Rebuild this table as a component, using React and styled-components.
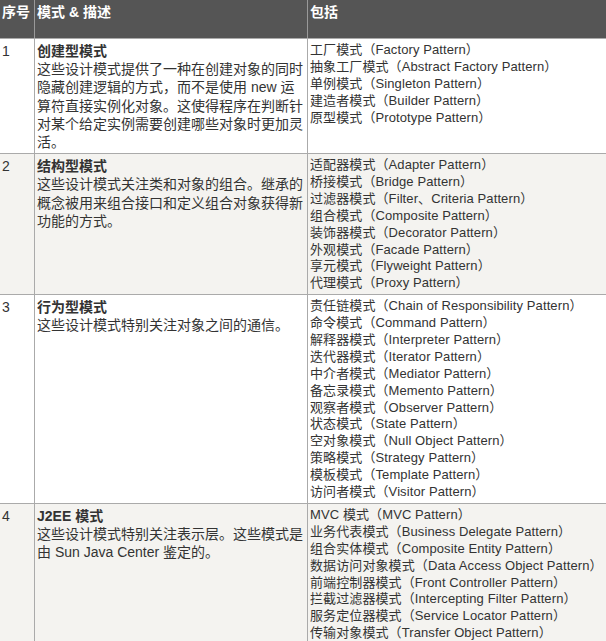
import React from "react";
import styled, {createGlobalStyle} from "styled-components";

const GlobalStyle = createGlobalStyle`
  html, body {
    margin: 0;
    padding: 0;
    background: #fff;
    overflow: hidden;
  }
  body {
    font-family: "Liberation Sans", "Noto Sans CJK SC", sans-serif;
    color: #333;
  }
`

const Table = styled.table`
  width: 640px;
  table-layout: fixed;
  border-collapse: collapse;
  font-family: "Liberation Sans", "Noto Sans CJK SC", sans-serif;
`

const Th = styled.th`
  width: ${props => props.$w ? props.$w + "px" : "auto"};
  height: 32px;
  background: #555;
  color: #fff;
  font-size: 14px;
  font-weight: bold;
  line-height: 1.3;
  text-align: left;
  vertical-align: top;
  padding: 3px 2px 3px;
  border-left: 1px solid #999;
  border-bottom: 1px solid #aaa;
  white-space: nowrap;
  overflow: hidden;
  &:first-child {
    border-left: none;
  }
`

const Row = styled.tr`
  background: ${props => props.$alt ? "#f4f3f0" : "#fff"};
`

const Td = styled.td`
  vertical-align: top;
  padding: 3px 2px 2px;
  border-left: 1px solid #aaa;
  border-bottom: 1px solid #aaa;
  line-height: 1.3;
  font-size: ${props => props.$small ? "13px" : "14px"};
  letter-spacing: ${props => props.$small ? "0.1px" : "0"};
  color: #333;
  &:first-child {
    border-left: none;
  }
`

const Title = styled.b`
  display: block;
  font-weight: bold;
`

const PatternLine = styled.div`
  white-space: nowrap;
`

const data = [
    {
        num: "1",
        title: "创建型模式",
        desc: "这些设计模式提供了一种在创建对象的同时隐藏创建逻辑的方式，而不是使用 new 运算符直接实例化对象。这使得程序在判断针对某个给定实例需要创建哪些对象时更加灵活。",
        patterns: [
            "工厂模式（Factory Pattern）",
            "抽象工厂模式（Abstract Factory Pattern）",
            "单例模式（Singleton Pattern）",
            "建造者模式（Builder Pattern）",
            "原型模式（Prototype Pattern）",
        ]
    },
    {
        num: "2",
        title: "结构型模式",
        desc: "这些设计模式关注类和对象的组合。继承的概念被用来组合接口和定义组合对象获得新功能的方式。",
        patterns: [
            "适配器模式（Adapter Pattern）",
            "桥接模式（Bridge Pattern）",
            "过滤器模式（Filter、Criteria Pattern）",
            "组合模式（Composite Pattern）",
            "装饰器模式（Decorator Pattern）",
            "外观模式（Facade Pattern）",
            "享元模式（Flyweight Pattern）",
            "代理模式（Proxy Pattern）",
        ]
    },
    {
        num: "3",
        title: "行为型模式",
        desc: "这些设计模式特别关注对象之间的通信。",
        patterns: [
            "责任链模式（Chain of Responsibility Pattern）",
            "命令模式（Command Pattern）",
            "解释器模式（Interpreter Pattern）",
            "迭代器模式（Iterator Pattern）",
            "中介者模式（Mediator Pattern）",
            "备忘录模式（Memento Pattern）",
            "观察者模式（Observer Pattern）",
            "状态模式（State Pattern）",
            "空对象模式（Null Object Pattern）",
            "策略模式（Strategy Pattern）",
            "模板模式（Template Pattern）",
            "访问者模式（Visitor Pattern）",
        ]
    },
    {
        num: "4",
        title: "J2EE 模式",
        desc: "这些设计模式特别关注表示层。这些模式是由 Sun Java Center 鉴定的。",
        patterns: [
            "MVC 模式（MVC Pattern）",
            "业务代表模式（Business Delegate Pattern）",
            "组合实体模式（Composite Entity Pattern）",
            "数据访问对象模式（Data Access Object Pattern）",
            "前端控制器模式（Front Controller Pattern）",
            "拦截过滤器模式（Intercepting Filter Pattern）",
            "服务定位器模式（Service Locator Pattern）",
            "传输对象模式（Transfer Object Pattern）",
        ]
    },
]

const App = () => {

    return (
        <>
            <GlobalStyle/>
            <Table>
                <thead>
                    <tr>
                        <Th $w={30}>序号</Th>
                        <Th $w={268}>模式 &amp; 描述</Th>
                        <Th>包括</Th>
                    </tr>
                </thead>
                <tbody>
                    {data.map((row, i) => (
                        <Row key={row.num} $alt={i % 2 === 1}>
                            <Td>{row.num}</Td>
                            <Td>
                                <Title>{row.title}</Title>
                                {row.desc}
                            </Td>
                            <Td $small>
                                {row.patterns.map(p => (
                                    <PatternLine key={p}>{p}</PatternLine>
                                ))}
                            </Td>
                        </Row>
                    ))}
                </tbody>
            </Table>
        </>
    )
}

export default App;
